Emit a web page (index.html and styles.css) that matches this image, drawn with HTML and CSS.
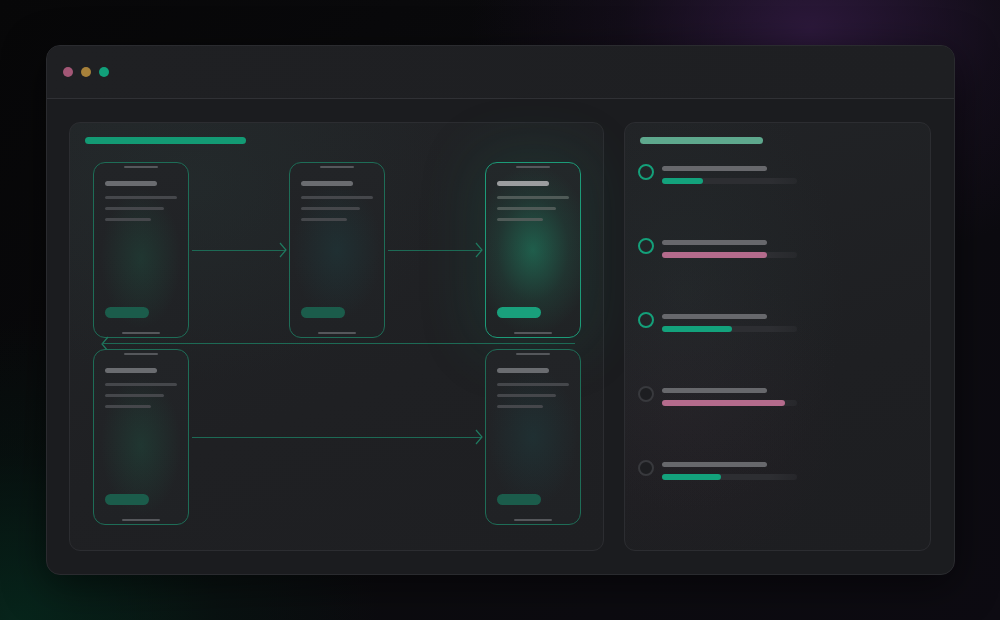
FILE: index.html
```html
<!DOCTYPE html>
<html>
<head>
<meta charset="utf-8">
<link rel="stylesheet" href="styles.css">
</head>
<body>
<div class="window">
  <div class="titlebar">
    <span class="dot dot-pink"></span>
    <span class="dot dot-amber"></span>
    <span class="dot dot-green"></span>
  </div>
  <div class="content">
    <section class="panel flow-panel">
      <div class="panel-title title-green"></div>
      <div class="flow">
        <div class="phone">
          <div class="notch"></div>
          <div class="ph-title"></div>
          <div class="ph-line l1"></div>
          <div class="ph-line l2"></div>
          <div class="ph-line l3"></div>
          <div class="spacer"></div>
          <div class="ph-btn"></div>
          <div class="home"></div>
        </div>
        <div class="arrow-cell">
          <div class="arrow"><div class="shaft"></div><svg class="head" width="8" height="16" viewBox="0 0 8 16"><polyline points="1,1 7,8 1,15" fill="none" stroke="#1f7a60" stroke-width="1.2"/></svg></div>
        </div>
        <div class="phone phone-b">
          <div class="notch"></div>
          <div class="ph-title"></div>
          <div class="ph-line l1"></div>
          <div class="ph-line l2"></div>
          <div class="ph-line l3"></div>
          <div class="spacer"></div>
          <div class="ph-btn"></div>
          <div class="home"></div>
        </div>
        <div class="arrow-cell">
          <div class="arrow"><div class="shaft"></div><svg class="head" width="8" height="16" viewBox="0 0 8 16"><polyline points="1,1 7,8 1,15" fill="none" stroke="#1f7a60" stroke-width="1.2"/></svg></div>
        </div>
        <div class="phone phone-active">
          <div class="notch"></div>
          <div class="ph-title"></div>
          <div class="ph-line l1"></div>
          <div class="ph-line l2"></div>
          <div class="ph-line l3"></div>
          <div class="spacer"></div>
          <div class="ph-btn"></div>
          <div class="home"></div>
        </div>

        <div class="return-cell">
          <div class="arrow back"><svg class="head" width="8" height="16" viewBox="0 0 8 16"><polyline points="7,1 1,8 7,15" fill="none" stroke="#1f7a60" stroke-width="1.2"/></svg><div class="shaft"></div></div>
        </div>

        <div class="phone">
          <div class="notch"></div>
          <div class="ph-title"></div>
          <div class="ph-line l1"></div>
          <div class="ph-line l2"></div>
          <div class="ph-line l3"></div>
          <div class="spacer"></div>
          <div class="ph-btn"></div>
          <div class="home"></div>
        </div>
        <div class="arrow-cell wide">
          <div class="arrow"><div class="shaft"></div><svg class="head" width="8" height="16" viewBox="0 0 8 16"><polyline points="1,1 7,8 1,15" fill="none" stroke="#1f7a60" stroke-width="1.2"/></svg></div>
        </div>
        <div class="phone phone-b">
          <div class="notch"></div>
          <div class="ph-title"></div>
          <div class="ph-line l1"></div>
          <div class="ph-line l2"></div>
          <div class="ph-line l3"></div>
          <div class="spacer"></div>
          <div class="ph-btn"></div>
          <div class="home"></div>
        </div>
      </div>
    </section>

    <section class="panel list-panel">
      <div class="panel-title title-teal"></div>
      <div class="items">
        <div class="item">
          <span class="ring ring-on"></span>
          <div class="bars"><div class="label"></div><div class="track"><div class="fill fill-green" style="width:30%"></div></div></div>
        </div>
        <div class="item">
          <span class="ring ring-on"></span>
          <div class="bars"><div class="label"></div><div class="track"><div class="fill fill-pink" style="width:78%"></div></div></div>
        </div>
        <div class="item">
          <span class="ring ring-on"></span>
          <div class="bars"><div class="label"></div><div class="track"><div class="fill fill-green" style="width:52%"></div></div></div>
        </div>
        <div class="item">
          <span class="ring"></span>
          <div class="bars"><div class="label"></div><div class="track"><div class="fill fill-pink" style="width:91%"></div></div></div>
        </div>
        <div class="item">
          <span class="ring"></span>
          <div class="bars"><div class="label"></div><div class="track"><div class="fill fill-green" style="width:44%"></div></div></div>
        </div>
      </div>
    </section>
  </div>
</div>
</body>
</html>
```

FILE: styles.css
```css
* { box-sizing: border-box; }
html, body { margin: 0; padding: 0; }
body {
  width: 1000px;
  height: 620px;
  overflow: hidden;
  font-family: "Liberation Sans", Arial, sans-serif;
  background:
    radial-gradient(ellipse 340px 240px at 810px 30px, rgba(58, 30, 78, 0.7), rgba(38, 20, 52, 0.3) 55%, rgba(0,0,0,0) 100%),
    radial-gradient(ellipse 360px 300px at 20px 620px, rgba(6, 46, 32, 0.75), rgba(5, 30, 22, 0.35) 55%, rgba(0,0,0,0) 100%),
    linear-gradient(135deg, #070708 0%, #0b0b0e 50%, #0d0b12 100%);
  padding-top: 45px;
  padding-left: 46px;
}

.window {
  width: 909px;
  height: 530px;
  border: 1px solid #2a2b2f;
  border-radius: 14px;
  background: #1b1c1f;
  overflow: hidden;
  box-shadow: 0 10px 40px rgba(0,0,0,0.5);
  display: flex;
  flex-direction: column;
}

.titlebar {
  height: 53px;
  flex: none;
  background: linear-gradient(90deg, #1f2023, #1e1f22);
  border-bottom: 1px solid #303135;
  display: flex;
  align-items: center;
  gap: 8px;
  padding-left: 16px;
}
.dot { width: 10px; height: 10px; border-radius: 50%; display: block; }
.dot-pink { background: #a35776; }
.dot-amber { background: #a7813a; }
.dot-green { background: #11a07a; }

.content {
  flex: 1;
  display: grid;
  grid-template-columns: 535px 307px;
  column-gap: 20px;
  padding: 23px 22px 23px 22px;
}

.panel {
  border: 1px solid #2c2d31;
  border-radius: 11px;
  height: 429px;
  padding: 14px 15px;
}
.flow-panel {
  background:
    radial-gradient(ellipse 260px 200px at 120px 60px, rgba(40, 60, 58, 0.25), rgba(0,0,0,0) 100%),
    linear-gradient(160deg, #222427 0%, #1f2023 60%, #1e1f22 100%);
}
.list-panel {
  background:
    radial-gradient(ellipse 160px 220px at 60px 170px, rgba(45, 60, 60, 0.22), rgba(0,0,0,0) 100%),
    radial-gradient(ellipse 160px 160px at 60px 290px, rgba(60, 35, 50, 0.18), rgba(0,0,0,0) 100%),
    linear-gradient(160deg, #212326 0%, #1e1f22 60%, #1d1e21 100%);
}

.panel-title { height: 7px; border-radius: 4px; }
.title-green { width: 161px; background: #139a74; }
.title-teal { width: 123px; background: #5ea88d; }

.flow {
  margin-top: 18px;
  margin-left: 8px;
  display: grid;
  grid-template-columns: 96px 100px 96px 100px 96px;
  grid-template-rows: 176px 11px 176px;
}

.phone {
  border: 1px solid #1e6d57;
  border-radius: 12px;
  padding: 3px 11px 3px 11px;
  display: flex;
  flex-direction: column;
  background:
    radial-gradient(ellipse 40px 70px at 50% 55%, rgba(30, 110, 82, 0.26), rgba(0,0,0,0) 100%),
    linear-gradient(180deg, #222427, #202225);
}
.phone-b {
  background:
    radial-gradient(ellipse 45px 70px at 50% 50%, rgba(28, 80, 82, 0.28), rgba(0,0,0,0) 100%),
    linear-gradient(180deg, #222427, #202225);
}
.phone-active {
  border-color: #1c9b78;
  background:
    radial-gradient(ellipse 60px 85px at 50% 50%, rgba(30, 140, 105, 0.55), rgba(30, 110, 85, 0.2) 60%, rgba(0,0,0,0) 100%),
    linear-gradient(180deg, #23282a, #202325);
  box-shadow: 0 0 60px 8px rgba(24, 120, 92, 0.18);
}

.notch { width: 34px; height: 2px; background: #55575b; border-radius: 1px; align-self: center; }
.ph-title { width: 52px; height: 5px; border-radius: 3px; background: #6a6c70; margin-top: 13px; }
.phone-active .ph-title { background: #9b9d9f; }
.ph-line { height: 3px; border-radius: 2px; background: #45474b; }
.phone-active .ph-line { background: #4f5a57; }
.l1 { width: 72px; margin-top: 10px; }
.l2 { width: 59px; margin-top: 8px; }
.l3 { width: 46px; margin-top: 8px; }
.spacer { flex: 1; }
.ph-btn { width: 44px; height: 11px; border-radius: 6px; background: #1b5c4b; }
.phone-active .ph-btn { background: #19a07c; }
.home { width: 38px; height: 2px; background: #55575b; border-radius: 1px; align-self: center; margin-top: 14px; }

.arrow-cell {
  display: flex;
  align-items: center;
  padding: 0 2px 0 3px;
}
.arrow-cell.wide { grid-column: 2 / 5; }
.arrow { flex: 1; display: flex; align-items: center; }
.shaft { flex: 1; height: 1px; background: #1d6a55; }
.head { display: block; flex: none; margin-left: -7px; }
.back .head { margin-left: 0; margin-right: -7px; }

.return-cell {
  grid-column: 1 / 6;
  display: flex;
  align-items: center;
  padding: 0 6px 0 8px;
}

.items {
  margin-top: 20px;
  display: flex;
  flex-direction: column;
  gap: 54px;
}
.item { display: flex; align-items: flex-start; gap: 8px; margin-left: -2px; }
.ring {
  width: 16px; height: 16px; border-radius: 50%;
  border: 2px solid #38393d;
  background: #1d1e21;
  flex: none;
}
.ring-on { border-color: #14a07a; background: transparent; }
.bars { padding-top: 2px; }
.label { width: 105px; height: 5px; border-radius: 3px; background: #67686c; }
.track {
  margin-top: 7px;
  width: 135px; height: 6px; border-radius: 3px;
  background: linear-gradient(90deg, #2d2e32 80%, rgba(45,46,50,0.5));
}
.fill { height: 6px; border-radius: 3px; }
.fill-green { background: #13a27c; }
.fill-pink { background: #b46b8c; }
```
